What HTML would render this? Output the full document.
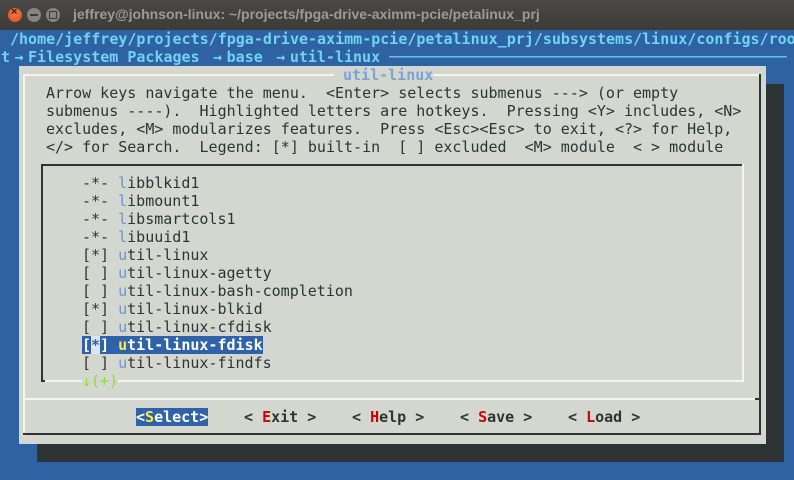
<!DOCTYPE html>
<html><head><meta charset="utf-8"><style>
*{margin:0;padding:0}
body{width:794px;height:480px;overflow:hidden;background:#2f62a3;position:relative;font-family:"DejaVu Sans Mono","Liberation Mono",monospace;font-size:15px}
.tb{position:absolute;left:0;top:0;width:794px;height:30px;background:linear-gradient(#4a4945,#3c3b37)}
.c{position:absolute;top:8px;width:14px;height:14px;border-radius:50%}
.tt{position:absolute;left:73px;top:6px;font:bold 14px "Liberation Sans",sans-serif;color:#9c9a94;white-space:pre}
.r{position:absolute;height:18px;line-height:18px;white-space:pre}
.cy{color:#6fd3f2;font-weight:bold}
.d{color:#2e3436}
.h{color:#6e96c8}
.b{position:absolute}
.ar{display:inline-block;width:18px;text-align:center}
</style></head><body>
<div class="tb"></div>
<div class="c" style="left:8px;background:radial-gradient(circle at 50% 40%,#f47a4a,#d94c1c)"><span style="position:absolute;left:3px;top:-2px;font:bold 11px sans-serif;color:#3a1a10">×</span></div>
<div class="c" style="left:27px;background:#86847f"><span style="position:absolute;left:3px;top:6px;width:8px;height:2px;background:#3c3b37"></span></div>
<div class="c" style="left:46px;background:#86847f"><span style="position:absolute;left:3px;top:3px;width:6px;height:6px;border:1px solid #3c3b37"></span></div>
<div class="tt">jeffrey@johnson-linux: ~/projects/fpga-drive-aximm-pcie/petalinux_prj</div>

<div class="r cy" style="left:10px;top:30px">/home/jeffrey/projects/fpga-drive-aximm-pcie/petalinux_prj/subsystems/linux/configs/roo</div>
<div class="r cy" style="left:1px;top:48px">t<span class="ar">→</span>Filesystem Packages <span class="ar">→</span>base <span class="ar">→</span>util-linux ────────────────────────────────────────────</div>

<div class="b" style="left:766px;top:84px;width:18px;height:378px;background:#2e3436"></div>
<div class="b" style="left:37px;top:444px;width:747px;height:18px;background:#2e3436"></div>
<div class="b" style="left:19px;top:66px;width:747px;height:378px;background:#d3d7cf"></div>
<div class="b" style="left:23px;top:74px;width:2px;height:360px;background:#f4f4f0"></div>
<div class="b" style="left:23px;top:74px;width:311px;height:2px;background:#f4f4f0"></div>
<div class="b" style="left:433px;top:74px;width:328px;height:2px;background:#f4f4f0"></div>
<div class="b" style="left:759px;top:74px;width:2px;height:361px;background:#2e3436"></div>
<div class="b" style="left:23px;top:433px;width:738px;height:2px;background:#2e3436"></div>
<div class="r h" style="left:343px;top:66px;font-weight:bold;color:#7fa2d4">util-linux</div>
<div class="r d" style="left:46px;top:84px">Arrow keys navigate the menu.  &lt;Enter&gt; selects submenus ---&gt; (or empty</div>
<div class="r d" style="left:46px;top:102px">submenus ----).  Highlighted letters are hotkeys.  Pressing &lt;Y&gt; includes, &lt;N&gt;</div>
<div class="r d" style="left:46px;top:120px">excludes, &lt;M&gt; modularizes features.  Press &lt;Esc&gt;&lt;Esc&gt; to exit, &lt;?&gt; for Help,</div>
<div class="r d" style="left:46px;top:138px">&lt;/&gt; for Search.  Legend: [*] built-in  [ ] excluded  &lt;M&gt; module  &lt; &gt; module</div>
<div class="b" style="left:41px;top:164px;width:703px;height:2px;background:#2e3436"></div>
<div class="b" style="left:41px;top:164px;width:2px;height:218px;background:#2e3436"></div>
<div class="b" style="left:742px;top:164px;width:2px;height:218px;background:#f4f4f0"></div>
<div class="b" style="left:41px;top:380px;width:703px;height:2px;background:#f4f4f0"></div>
<div class="b" style="left:41px;top:380px;width:4px;height:2px;background:#2e3436"></div>
<div class="r d" style="left:82px;top:174px">-*- <span class="h">l</span>ibblkid1</div>
<div class="r d" style="left:82px;top:192px">-*- <span class="h">l</span>ibmount1</div>
<div class="r d" style="left:82px;top:210px">-*- <span class="h">l</span>ibsmartcols1</div>
<div class="r d" style="left:82px;top:228px">-*- <span class="h">l</span>ibuuid1</div>
<div class="r d" style="left:82px;top:246px">[*] <span class="h">u</span>til-linux</div>
<div class="r d" style="left:82px;top:264px">[ ] <span class="h">u</span>til-linux-agetty</div>
<div class="r d" style="left:82px;top:282px">[ ] <span class="h">u</span>til-linux-bash-completion</div>
<div class="r d" style="left:82px;top:300px">[*] <span class="h">u</span>til-linux-blkid</div>
<div class="r d" style="left:82px;top:318px">[ ] <span class="h">u</span>til-linux-cfdisk</div>
<div class="r" style="left:82px;top:336px;background:#2f62a8;color:#fff;font-weight:bold">[<span style="background:#dfe4ec;color:#2f62a8">*</span>] <span style="color:#fce94f">u</span>til-linux-fdisk</div>
<div class="r d" style="left:82px;top:354px">[ ] <span class="h">u</span>til-linux-findfs</div>
<div class="r" style="left:82px;top:372px;color:#8ae234;background:#d3d7cf">↓(+)</div>
<div class="b" style="left:23px;top:398px;width:738px;height:2px;background:#f4f4f0"></div>
<div class="b" style="left:755px;top:398px;width:6px;height:2px;background:#2e3436"></div>
<div class="r" style="left:136px;top:408px;background:#2f62a8;color:#fff;font-weight:bold">&lt;<span style="color:#fce94f">S</span>elect&gt;</div>
<div class="r d" style="left:244px;top:408px;font-weight:bold">&lt; <span style="color:#cc0000">E</span>xit &gt;</div>
<div class="r d" style="left:352px;top:408px;font-weight:bold">&lt; <span style="color:#cc0000">H</span>elp &gt;</div>
<div class="r d" style="left:460px;top:408px;font-weight:bold">&lt; <span style="color:#cc0000">S</span>ave &gt;</div>
<div class="r d" style="left:568px;top:408px;font-weight:bold">&lt; <span style="color:#cc0000">L</span>oad &gt;</div>
</body></html>
